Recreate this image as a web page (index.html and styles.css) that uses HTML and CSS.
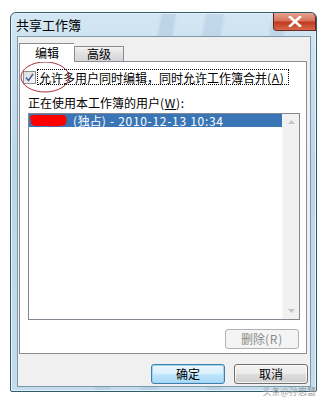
FILE: index.html
```html
<!DOCTYPE html>
<html>
<head>
<meta charset="utf-8">
<link rel="stylesheet" href="styles.css">
</head>
<body>
<div class="window">
  <div class="titlebar">
    <span class="title">共享工作簿</span>
    <div class="close"><svg width="14" height="11" viewBox="0 0 14 11"><path d="M2 1 L12 10 M12 1 L2 10" stroke="#fff" stroke-width="2.6" stroke-linecap="square"/></svg></div>
  </div>
  <div class="client">
    <div class="tabs">
      <div class="tab active">编辑</div>
      <div class="tab">高级</div>
    </div>
    <div class="panel">
      <div class="check-row">
        <span class="checkbox"><svg width="9" height="9" viewBox="0 0 9 9"><path d="M1 4.5 L3.5 7.5 L8 1" fill="none" stroke="#4a5f9a" stroke-width="1.6"/></svg></span>
        <span class="check-label">允许多用户同时编辑，同时允许工作簿合并<span class="a">(<u>A</u>)</span></span>
      </div>
      <div class="list-label">正在使用本工作簿的用户<span class="a">(<u>W</u>):</span></div>
      <div class="listbox">
        <div class="list-items">
          <div class="row"><svg class="scribble" width="40" height="13" viewBox="0 0 40 13"><path d="M1 2 Q6 0 14 1 L29 1 Q36 0 37 3 Q39 7 36 11 Q29 13 20 12 L6 12 Q1 11 2 7 Z" fill="#f00"/></svg><span class="row-text"><span class="a">(</span>独占<span class="a">) - 2010-12-13 10:34</span></span></div>
        </div>
        <div class="scrollbar">
          <svg width="7" height="4" viewBox="0 0 7 4"><path d="M0 4 L3.5 0 L7 4 Z" fill="#c4c4c4"/></svg>
          <svg width="7" height="4" viewBox="0 0 7 4"><path d="M0 0 L3.5 4 L7 0 Z" fill="#c4c4c4"/></svg>
        </div>
      </div>
      <div class="panel-actions">
        <div class="btn disabled">删除<span class="a">(R)</span></div>
      </div>
    </div>
    <div class="actions">
      <div class="btn default">确定</div>
      <div class="btn">取消</div>
    </div>
  </div>
  <svg class="ellipse" width="52" height="34" viewBox="0 0 52 34"><ellipse cx="26" cy="16" rx="24" ry="15" fill="none" stroke="#a8303a" stroke-width="1"/></svg>
  <span class="watermark">头条@孙忠慧</span>
</div>
</body>
</html>
```
FILE: styles.css
```css
html, body {
  margin: 0;
  padding: 0;
}
body {
  width: 325px;
  height: 401px;
  background: #fff;
  font-family: "Noto Sans CJK SC", "Noto Sans", sans-serif;
  font-size: 12px;
  color: #000;
  overflow: hidden;
}
.a {
  letter-spacing: 0.7px;
}
.window {
  position: relative;
  margin: 12px 0 0 10px;
  width: 307px;
  height: 380px;
  box-sizing: border-box;
  border: 1px solid #2f5c6e;
  border-radius: 6px 6px 2px 2px;
  background:
    linear-gradient(100deg, rgba(255,255,255,0) 0 40%, rgba(150,185,210,0.35) 41% 44%, rgba(255,255,255,0) 45% 52%, rgba(150,185,210,0.3) 53% 57%, rgba(255,255,255,0) 58% 70%, rgba(150,185,210,0.3) 71% 74%, rgba(255,255,255,0) 75%),
    linear-gradient(#d3e6f3, #bcd6e9 40%, #c4dced);
  display: flex;
  flex-direction: column;
  box-shadow: inset 0 0 0 1px #e6f1f8;
}
.titlebar {
  height: 23px;
  display: flex;
  justify-content: space-between;
  align-items: flex-start;
}
.title {
  font-size: 13px;
  line-height: 13px;
  margin: 5px 0 0 5px;
  color: #000;
}
.close {
  width: 43px;
  height: 18px;
  box-sizing: border-box;
  border: 1px solid #6b2a22;
  border-top: none;
  border-radius: 0 5px 0 4px;
  background: linear-gradient(#e8a493, #d7735c 45%, #c23a1e 55%, #d66a4c);
  display: flex;
  align-items: center;
  justify-content: center;
}
.client {
  margin: 0 5px 4px 6px;
  flex: 1;
  box-sizing: border-box;
  border: 1px solid #7c97a6;
  background: #f0f0f0;
  display: flex;
  flex-direction: column;
  padding: 6px 2px 2px 1px;
}
.tabs {
  display: flex;
  align-items: flex-end;
  height: 18px;
  position: relative;
  z-index: 1;
}
.tab {
  box-sizing: border-box;
  height: 15px;
  width: 50px;
  border: 1px solid #898c95;
  border-bottom: none;
  background: linear-gradient(#f2f2f2, #e0e0e0 50%, #d5d5d5);
  text-align: center;
  line-height: 14px;
  font-size: 12px;
}
.tab.active {
  height: 19px;
  width: 55px;
  margin-bottom: -1px;
  background: #fff;
  border-right: none;
  line-height: 17px;
}
.panel {
  width: 288px;
  height: 293px;
  box-sizing: border-box;
  border: 1px solid #898c95;
  background: #fff;
  display: flex;
  flex-direction: column;
  padding: 0 0 0 1px;
}
.check-row {
  margin-top: 6px;
  height: 18px;
  display: flex;
  align-items: center;
}
.checkbox {
  margin-left: 2px;
  width: 13px;
  height: 13px;
  box-sizing: border-box;
  border: 1px solid #8f8f8f;
  background: linear-gradient(135deg, #dcdcdc, #fbfbfb);
  display: flex;
  align-items: center;
  justify-content: center;
}
.check-label {
  margin-left: 1px;
  padding: 0 3px 0 1px;
  border: 1px dotted #000;
  line-height: 15px;
  height: 16px;
  box-sizing: border-box;
  white-space: nowrap;
}
u {
  text-decoration: underline;
  text-underline-offset: 1px;
}
.list-label {
  margin: 10px 0 0 7px;
  line-height: 14px;
  height: 14px;
}
.listbox {
  margin: 3px 0 0 7px;
  width: 272px;
  height: 207px;
  box-sizing: border-box;
  border: 1px solid #828790;
  display: flex;
  background: #fff;
}
.list-items {
  flex: 1;
}
.row {
  height: 13px;
  background: #3a76b6;
  color: #fff;
  display: flex;
  align-items: center;
  line-height: 13px;
  position: relative;
}
.scribble {
  flex: none;
}
.row-text {
  margin-left: 4px;
  white-space: nowrap;
}
.scrollbar {
  width: 17px;
  background: #f1f1f1;
  border-left: 1px solid #f6f6f6;
  display: flex;
  flex-direction: column;
  justify-content: space-between;
  align-items: center;
  padding: 6px 0 6px;
  box-sizing: border-box;
}
.panel-actions {
  display: flex;
  justify-content: flex-end;
  margin: 9px 7px 0 0;
}
.btn {
  width: 74px;
  height: 20px;
  box-sizing: border-box;
  border: 1px solid #707070;
  border-radius: 3px;
  background: linear-gradient(#f2f2f2, #ebebeb 50%, #dddddd 51%, #cfcfcf);
  display: flex;
  align-items: center;
  justify-content: center;
  font-size: 12px;
  line-height: 12px;
  box-shadow: inset 0 0 0 1px rgba(255,255,255,0.7);
}
.btn.disabled {
  border-color: #adb2b5;
  background: #f4f4f4;
  color: #8a8a8a;
  box-shadow: none;
}
.btn.default {
  border-color: #3c7fb1;
  background: linear-gradient(#eaf6fd, #d9f0fc 50%, #bee6fd 51%, #a7d9f5);
  box-shadow: inset 0 0 0 1px #a3d4ee;
}
.actions {
  display: flex;
  justify-content: flex-end;
  gap: 9px;
  margin-top: 10px;
  padding-right: 0;
}
.ellipse {
  position: absolute;
  left: 8px;
  top: 48px;
}
.watermark {
  position: absolute;
  right: 0;
  bottom: -6px;
  font-size: 9px;
  line-height: 10px;
  color: #9a9a9a;
  white-space: nowrap;
}
```
